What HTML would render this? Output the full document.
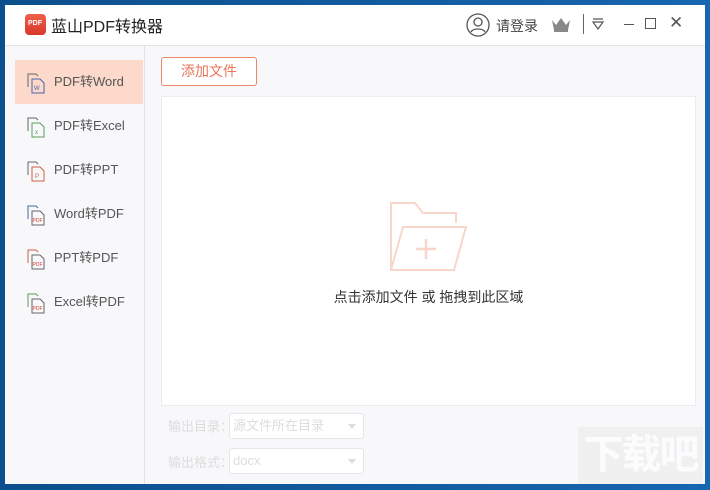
<!DOCTYPE html><html><head><meta charset="utf-8"><style>
body{margin:0;width:710px;height:490px;background:linear-gradient(90deg,#0d4f8c,#1766b0);position:relative;overflow:hidden;font-family:"Liberation Sans","Noto Sans CJK SC",sans-serif}
.win{position:absolute;left:5px;top:5px;width:700px;height:479px;background:#f8f7fa}
.title{position:absolute;left:0;top:0;width:700px;height:40px;background:#fff;border-bottom:1px solid #e2e2e6}
.side{position:absolute;left:0;top:41px;width:139px;height:438px;border-right:1px solid #e2e2e6;background:#f8f7fa}
.item{position:absolute;left:10px;width:128px;height:44px;font-size:13px;color:#555;line-height:44px}
.item svg{position:absolute;left:10px;top:12px}
.item span{position:absolute;left:39px}
.sel{background:#fcd9cb}
.btn{position:absolute;left:156px;top:52px;width:94px;height:27px;border:1px solid #e9876a;border-radius:3px;background:#fff;color:#e9765a;font-size:14px;text-align:center;line-height:27px}
.drop{position:absolute;left:156px;top:91px;width:533px;height:308px;background:#fff;border:1px solid #ececef}
.lbl{position:absolute;left:163px;font-size:13px;color:#ddd}
.sel2{position:absolute;left:224px;width:133px;height:24px;border:1px solid #e6e6e6;border-radius:3px;background:#fff;font-size:13px;color:#ddd;line-height:24px;text-indent:3px}
.sel2:after{content:"";position:absolute;right:7px;top:10px;border:4px solid transparent;border-top:5px solid #ddd}
</style></head><body><div class="win">
<div class="title">
<div style="position:absolute;left:20px;top:9px;width:21px;height:21px;border-radius:4px;background:linear-gradient(#f0604a,#d8382a)"><span style="position:absolute;left:3px;top:6px;font-size:7px;color:#fff;font-weight:bold">PDF</span></div>
<div style="position:absolute;left:46px;top:8px;font-size:16px;color:#222">蓝山PDF转换器</div>
<svg style="position:absolute;left:461px;top:8px" width="24" height="24" viewBox="0 0 24 24" fill="none" stroke="#555" stroke-width="1.3"><circle cx="12" cy="12" r="11"/><circle cx="12" cy="9" r="4"/><path d="M5 19c2-4 12-4 14 0"/></svg>
<div style="position:absolute;left:491px;top:11px;font-size:14px;color:#444">请登录</div>
<svg style="position:absolute;left:546px;top:12px" width="20" height="16" viewBox="0 0 20 16" fill="#888"><path d="M1 3l4 5 5-7 5 7 4-5-2 10H3z"/><rect x="3" y="13" width="14" height="2"/></svg>
<div style="position:absolute;left:578px;top:9px;width:1px;height:20px;background:#666"></div>
<svg style="position:absolute;left:586px;top:12px" width="14" height="14" viewBox="0 0 14 14" fill="none" stroke="#555" stroke-width="1.2"><path d="M2 2h10M2 5h10L7 12z"/></svg>
<div style="position:absolute;left:619px;top:19px;width:10px;height:1px;background:#555"></div>
<div style="position:absolute;left:640px;top:13px;width:9px;height:9px;border:1.2px solid #555"></div>
<div style="position:absolute;left:664px;top:8px;font-size:17px;color:#555">✕</div>
</div>
<div class="side">
<div class="item sel" style="top:14px"><svg width="22" height="22" viewBox="0 0 22 22" fill="none" stroke="#666"><path d="M3 15V2h8l2 2"/><path d="M7 7h8l4 4v10H7z" stroke="#4a64a8"/><text x="9" y="18" font-size="6" fill="#4a64a8" stroke="none">W</text></svg><span>PDF转Word</span></div>
<div class="item" style="top:58px"><svg width="22" height="22" viewBox="0 0 22 22" fill="none" stroke="#666"><path d="M3 15V2h8l2 2"/><path d="M7 7h8l4 4v10H7z" stroke="#58a058"/><text x="10" y="18" font-size="6" fill="#58a058" stroke="none">x</text></svg><span>PDF转Excel</span></div>
<div class="item" style="top:102px"><svg width="22" height="22" viewBox="0 0 22 22" fill="none" stroke="#666"><path d="M3 15V2h8l2 2"/><path d="M7 7h8l4 4v10H7z" stroke="#d06040"/><text x="10" y="18" font-size="6" fill="#d06040" stroke="none">P</text></svg><span>PDF转PPT</span></div>
<div class="item" style="top:146px"><svg width="22" height="22" viewBox="0 0 22 22" fill="none" stroke="#4a64a8"><path d="M3 15V2h8l2 2"/><path d="M7 7h8l4 4v10H7z" stroke="#666"/><text x="7.5" y="18" font-size="5" fill="#d04030" stroke="none">PDF</text></svg><span>Word转PDF</span></div>
<div class="item" style="top:190px"><svg width="22" height="22" viewBox="0 0 22 22" fill="none" stroke="#d06040"><path d="M3 15V2h8l2 2"/><path d="M7 7h8l4 4v10H7z" stroke="#666"/><text x="7.5" y="18" font-size="5" fill="#d04030" stroke="none">PDF</text></svg><span>PPT转PDF</span></div>
<div class="item" style="top:234px"><svg width="22" height="22" viewBox="0 0 22 22" fill="none" stroke="#58a058"><path d="M3 15V2h8l2 2"/><path d="M7 7h8l4 4v10H7z" stroke="#666"/><text x="7.5" y="18" font-size="5" fill="#d04030" stroke="none">PDF</text></svg><span>Excel转PDF</span></div>
</div>
<div class="btn">添加文件</div>
<div class="drop">
<svg style="position:absolute;left:226px;top:103px" width="82" height="72" viewBox="0 0 82 72" fill="none" stroke="#f8d6cb" stroke-width="2"><path d="M3 70V3h24l8 10h33v10"/><path d="M3 70L15 27h63L66 70z"/><path d="M38 39v20M28 49h20" stroke-width="2.5"/></svg>
<div style="position:absolute;left:0;width:533px;top:190px;text-align:center;font-size:14px;color:#333">点击添加文件 或 拖拽到此区域</div>
</div>
<div class="lbl" style="top:411px">输出目录：</div><div class="sel2" style="top:408px">源文件所在目录</div>
<div class="lbl" style="top:447px">输出格式：</div><div class="sel2" style="top:443px">docx</div>
<div style="position:absolute;left:573px;top:422px;width:125px;height:57px;background:#ececec;opacity:.6;color:#fff;font-size:40px;font-weight:bold;line-height:57px;text-align:center;letter-spacing:-2px">下载吧</div>
</div></body></html>
